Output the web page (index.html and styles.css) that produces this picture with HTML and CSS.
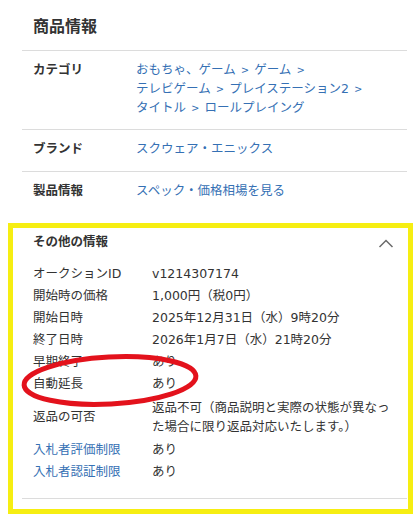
FILE: index.html
```html
<!DOCTYPE html>
<html lang="ja">
<head>
<meta charset="utf-8">
<title>商品情報</title>
<link rel="stylesheet" href="styles.css">
</head>
<body>
<div class="page">
  <section class="info">
    <h2 class="info-title">商品情報</h2>
    <dl class="info-list">
      <div class="info-row">
        <dt>カテゴリ</dt>
        <dd class="crumbs"><a href="#">おもちゃ、ゲーム</a><span class="sep">&nbsp;&gt; </span><a href="#">ゲーム</a><span class="sep">&nbsp;&gt; </span><a href="#">テレビゲーム</a><span class="sep">&nbsp;&gt; </span><a href="#">プレイステーション2</a><span class="sep">&nbsp;&gt; </span><a href="#">タイトル</a><span class="sep">&nbsp;&gt; </span><a href="#">ロールプレイング</a></dd>
      </div>
      <div class="info-row">
        <dt>ブランド</dt>
        <dd><a href="#">スクウェア・エニックス</a></dd>
      </div>
      <div class="info-row">
        <dt>製品情報</dt>
        <dd><a href="#">スペック・価格相場を見る</a></dd>
      </div>
    </dl>
  </section>

  <section class="other">
    <div class="other-head">
      <h3 class="other-title">その他の情報</h3>
      <svg class="chevron" width="16" height="9" viewBox="0 0 16 9" aria-hidden="true">
        <polyline points="1.5,8 8,1.5 14.5,8" fill="none" stroke="#6b6b6b" stroke-width="1.5"/>
      </svg>
    </div>
    <dl class="other-list">
      <div class="other-row"><dt>オークションID</dt><dd>v1214307174</dd></div>
      <div class="other-row"><dt>開始時の価格</dt><dd>1,000円（税0円）</dd></div>
      <div class="other-row"><dt>開始日時</dt><dd>2025年12月31日（水）9時20分</dd></div>
      <div class="other-row"><dt>終了日時</dt><dd>2026年1月7日（水）21時20分</dd></div>
      <div class="other-row"><dt>早期終了</dt><dd>あり</dd></div>
      <div class="other-row"><dt>自動延長</dt><dd>あり</dd></div>
      <div class="other-row other-row--multi"><dt>返品の可否</dt><dd>返品不可（商品説明と実際の状態が異なった場合に限り返品対応いたします。）</dd></div>
      <div class="other-row"><dt><a href="#">入札者評価制限</a></dt><dd>あり</dd></div>
      <div class="other-row"><dt><a href="#">入札者認証制限</a></dt><dd>あり</dd></div>
    </dl>
  </section>

  <svg class="annotation" width="420" height="518" viewBox="0 0 420 518" aria-hidden="true">
    <ellipse cx="110" cy="380.5" rx="86" ry="23.5" transform="rotate(-3 110 380.5)" fill="none" stroke="#e3121c" stroke-width="5"/>
  </svg>
</div>
</body>
</html>
```

FILE: styles.css
```css
* {
  box-sizing: border-box;
  margin: 0;
  padding: 0;
}

body {
  font-family: "DejaVu Sans", "Noto Sans CJK JP", sans-serif;
  font-size: 12.5px;
  color: #333;
  background: #fff;
}

a {
  color: #3570b4;
  text-decoration: none;
}

.page {
  position: relative;
  width: 420px;
  height: 518px;
  overflow: hidden;
}

/* 商品情報 */
.info {
  padding: 0 13px 0 22px;
}

.info-title {
  font-size: 16px;
  font-weight: bold;
  line-height: 20px;
  height: 51px;
  padding: 17px 11px 0;
  border-bottom: 1px solid #dcdcdc;
  color: #333;
}

.info-row {
  display: grid;
  grid-template-columns: 103px 1fr;
  padding: 10px 11px 12px;
  line-height: 18.75px;
  border-bottom: 1px solid #dcdcdc;
}

.info-row:last-child {
  border-bottom: none;
}

.info-row dt {
  font-weight: bold;
}

.crumbs {
  max-width: 240px;
  color: #3570b4;
}

.crumbs a {
  white-space: nowrap;
}

.sep {
  font-family: "Noto Sans CJK JP", sans-serif;
  padding: 0 3px;
  vertical-align: top;
}

/* その他の情報 */
.other {
  margin: 10px 7px 0 8px;
  border: 5px solid #f6ee12;
  padding: 0 1px 10px 9px;
}

.other-head {
  display: flex;
  justify-content: space-between;
  align-items: center;
  padding: 5px 13px 0 11px;
  line-height: 18.75px;
}

.other-title {
  font-size: 12.5px;
  font-weight: bold;
}

.chevron {
  display: block;
  margin-top: 2px;
}

.other-list {
  margin-top: 11px;
  padding: 0 10px 15px 11px;
  border-bottom: 1px solid #dcdcdc;
}

.other-row {
  display: grid;
  grid-template-columns: 119px 1fr;
  line-height: 22px;
}

.other-row dt {
  align-self: center;
}

.other-row--multi {
  line-height: 18.75px;
  padding: 4.5px 0 2.5px;
}

/* 注釈 */
.annotation {
  position: absolute;
  left: 0;
  top: 0;
  pointer-events: none;
}
```
